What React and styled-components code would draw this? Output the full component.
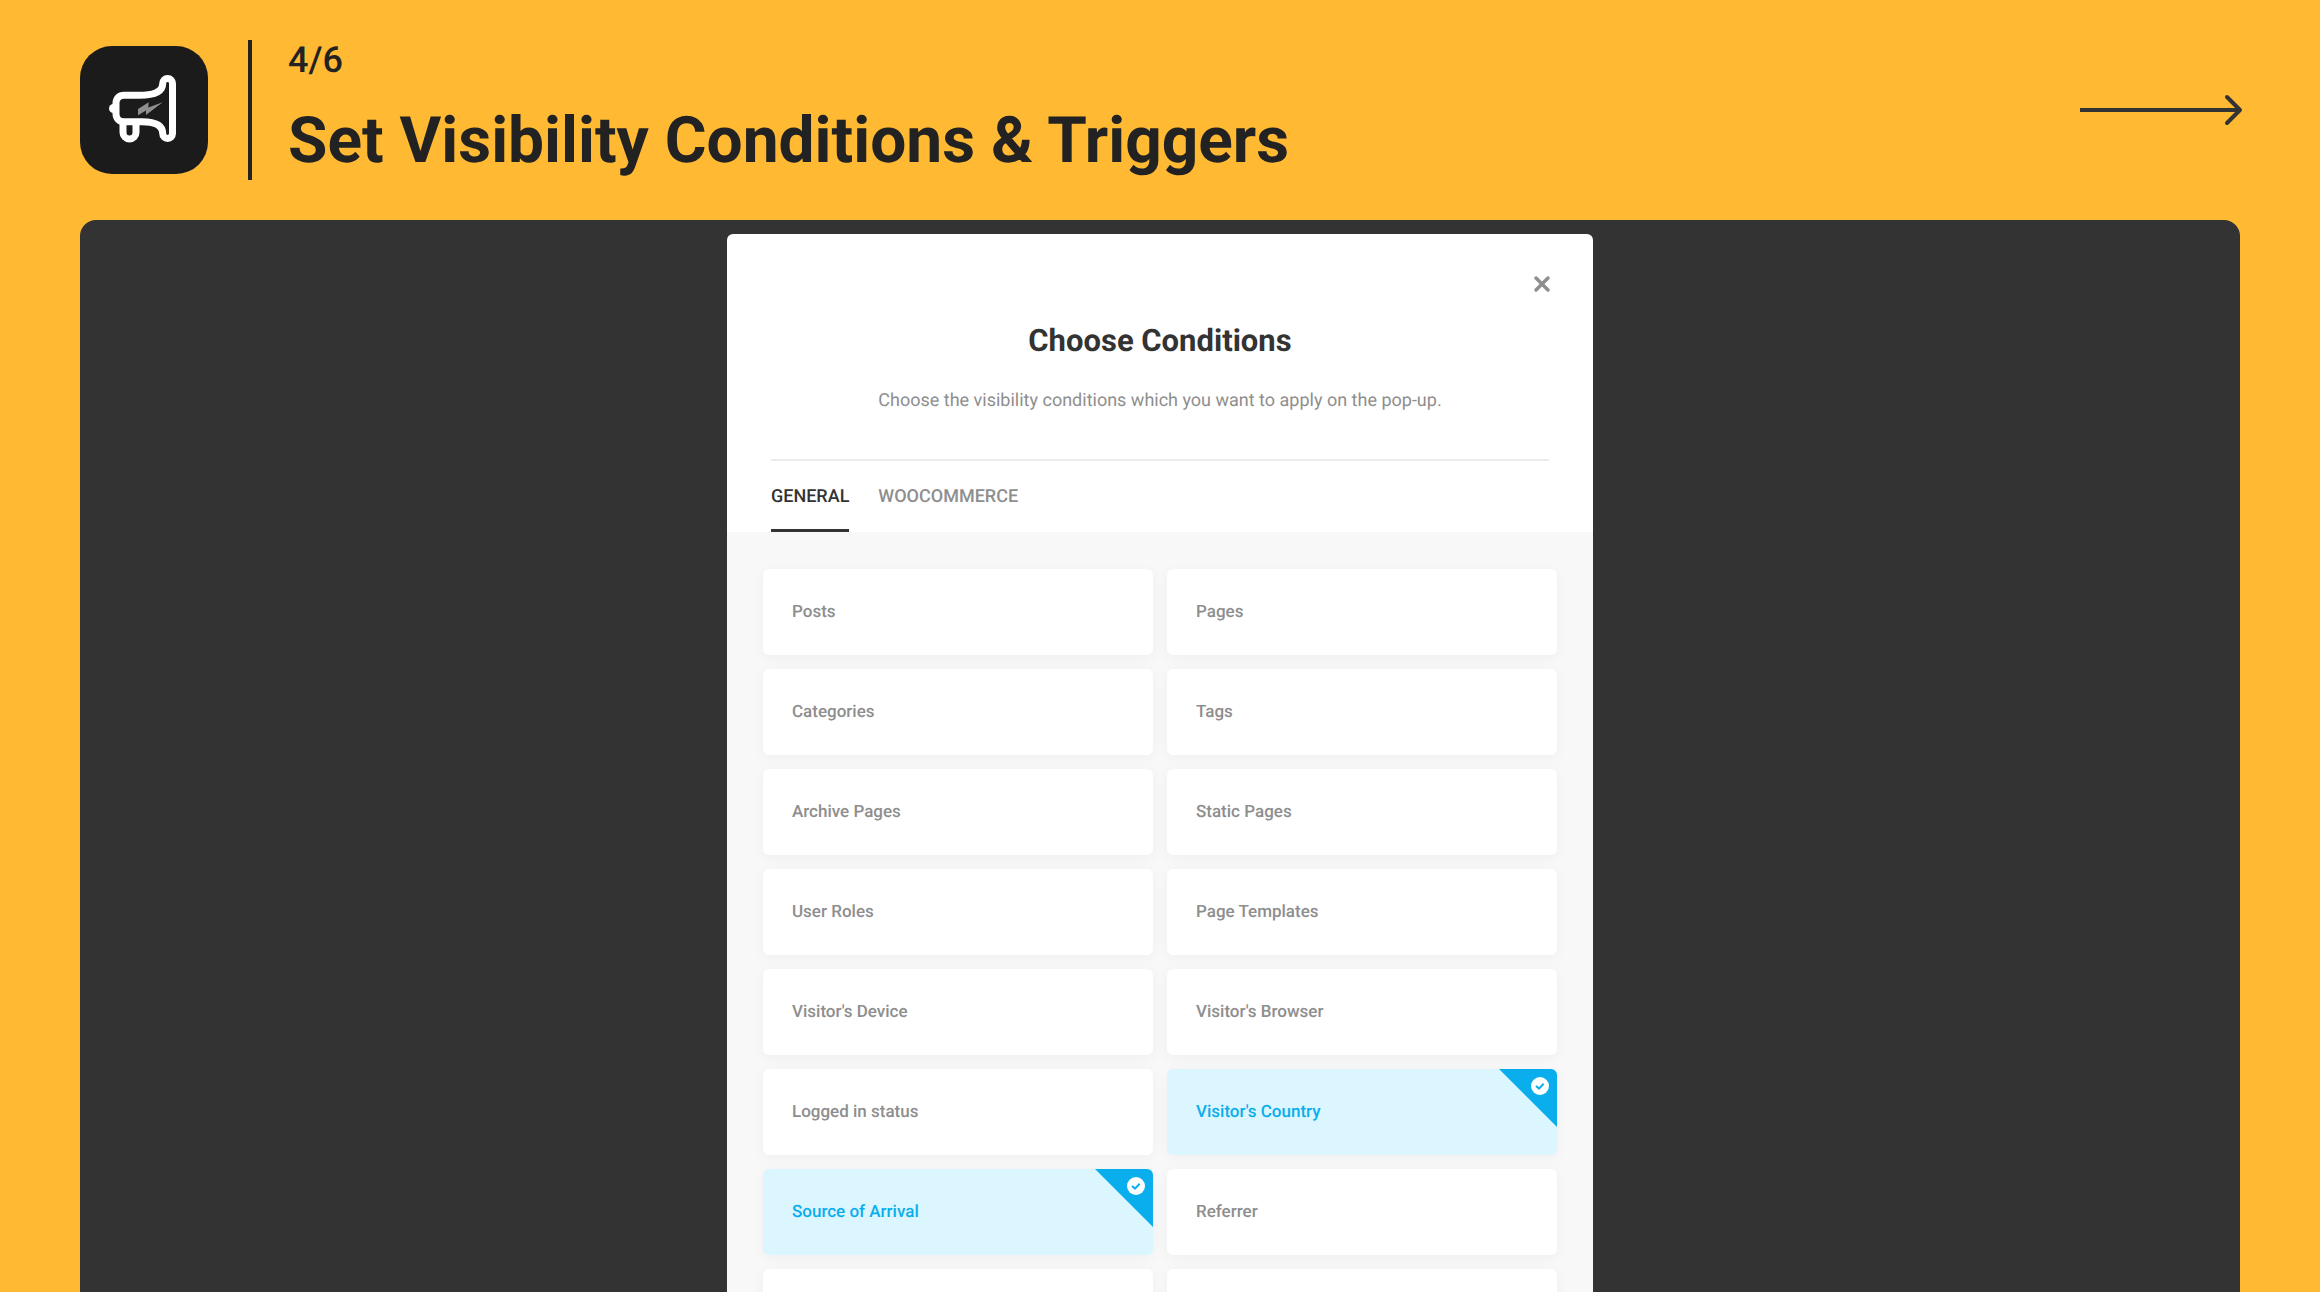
import React, { useState } from "react";
import styled, { createGlobalStyle } from "styled-components";

const GlobalStyle = createGlobalStyle`
  * {
    box-sizing: border-box;
  }
  body {
    margin: 0;
    background: #ffb933;
    color: #222222;
    font-family: Roboto, "Liberation Sans", sans-serif;
    text-rendering: geometricPrecision;
  }
`;

const Page = styled.div`
  display: flex;
  flex-direction: column;
  gap: 40px;
  height: 100vh;
  padding: 40px 80px 0;
  overflow: hidden;
`;

const Header = styled.header`
  display: flex;
  align-items: center;
  height: 140px;
  flex-shrink: 0;
`;

const Logo = styled.svg`
  width: 128px;
  height: 128px;
  flex-shrink: 0;
`;

const Heading = styled.div`
  display: flex;
  flex-direction: column;
  gap: 21px;
  align-self: stretch;
  margin-left: 40px;
  padding-left: 36px;
  border-left: 4px solid #222222;
  .step {
    margin: 0;
    font-size: 36px;
    font-weight: 500;
    line-height: 40px;
  }
  h1 {
    margin: 0;
    font-size: 64px;
    font-weight: 700;
    line-height: 80px;
  }
`;

const NextLink = styled.a`
  display: flex;
  margin-left: auto;
  margin-right: -4px;
  color: #333333;
`;

const Stage = styled.main`
  display: flex;
  flex: 1;
  justify-content: center;
  align-items: flex-start;
  min-height: 0;
  padding: 14px 14px 0;
  overflow: hidden;
  background: #333333;
  border-radius: 16px 16px 0 0;
`;

const Dialog = styled.section`
  width: 100%;
  max-width: 866px;
  overflow: hidden;
  background: #ffffff;
  border-radius: 6px;
`;

const DialogHead = styled.div`
  display: flex;
  flex-direction: column;
  margin: 0 44px;
  padding: 36px 0 44px;
  text-align: center;
  border-bottom: 2px solid #ebebeb;
  h2 {
    margin: 21px 0 0;
    color: #333333;
    font-size: 31px;
    font-weight: 700;
    line-height: 44px;
  }
  p {
    margin: 24px 0 0;
    color: #8e8e8e;
    font-size: 18px;
    line-height: 28px;
  }
`;

const CloseButton = styled.button`
  display: flex;
  align-self: flex-end;
  margin-right: -7px;
  padding: 4px;
  color: #8e8e8e;
  background: none;
  border: 0;
  cursor: pointer;
`;

const Tabs = styled.div`
  display: flex;
  gap: 29px;
  padding: 0 44px;
`;

const Tab = styled.button`
  height: 71px;
  padding: 3px 0 0;
  color: ${({ $active }) => ($active ? "#333333" : "#8e8e8e")};
  font-family: inherit;
  font-size: 18px;
  font-weight: 500;
  text-rendering: inherit;
  background: none;
  border: 0;
  border-bottom: 3px solid ${({ $active }) => ($active ? "#333333" : "transparent")};
  cursor: pointer;
`;

const Conditions = styled.div`
  display: grid;
  grid-template-columns: 1fr 1fr;
  gap: 14px;
  padding: 37px 36px;
  background: #f8f8f8;
`;

const Card = styled.div`
  position: relative;
  display: flex;
  align-items: center;
  height: 86px;
  padding: 0 29px;
  overflow: hidden;
  color: ${({ $checked }) => ($checked ? "#0aaeed" : "#8e8e8e")};
  font-size: 17px;
  font-weight: 500;
  background: ${({ $checked }) => ($checked ? "#dcf6ff" : "#ffffff")};
  border-radius: 6px;
  box-shadow: 0 3px 14px rgba(0, 0, 0, 0.04);
  cursor: pointer;
  input {
    position: absolute;
    inset: 0;
    margin: 0;
    opacity: 0;
    cursor: pointer;
  }
`;

const Corner = styled.svg`
  position: absolute;
  top: 0;
  right: 0;
  width: 58px;
  height: 58px;
`;

const initialConditions = [
  { label: "Posts" },
  { label: "Pages" },
  { label: "Categories" },
  { label: "Tags" },
  { label: "Archive Pages" },
  { label: "Static Pages" },
  { label: "User Roles" },
  { label: "Page Templates" },
  { label: "Visitor's Device" },
  { label: "Visitor's Browser" },
  { label: "Logged in status" },
  { label: "Visitor's Country", checked: true },
  { label: "Source of Arrival", checked: true },
  { label: "Referrer" },
];

const MegaphoneLogo = () => (
  <Logo viewBox="0 0 128 128" fill="none" aria-hidden="true">
    <rect width="128" height="128" rx="32" fill="#1c1b1b" />
    <circle cx="33.5" cy="62.5" r="4.5" fill="#ffffff" />
    <path
      d="M43 76V86.5a6.5 6.5 0 0 0 13 0V76"
      stroke="#ffffff"
      strokeWidth="7"
    />
    <path
      d="M92.5 37.5V87.5a4.9 4.9 0 0 1-9.8 0C82.7 79.5 76 75.7 62 75.7H44c-4.8 0-8-3.2-8-8V57.3c0-4.8 3.2-8 8-8H59C74 49.3 82.7 45.5 82.7 37.5a4.9 4.9 0 0 1 9.8 0Z"
      fill="#1c1b1b"
      stroke="#ffffff"
      strokeWidth="7"
    />
    <path
      d="M58 63L68.7 56.3L68.3 61.5L82.7 56.3L66 69V64.5L58 69.3Z"
      fill="#8f8f8f"
    />
  </Logo>
);

const SelectedCorner = () => (
  <Corner viewBox="0 0 58 58" aria-hidden="true">
    <path d="M0 0H58V58Z" fill="#0aaeed" />
    <circle cx="41" cy="17" r="9" fill="#ffffff" />
    <path
      d="M37 17l3 2.6 4.6-4.8"
      fill="none"
      stroke="#0aaeed"
      strokeWidth="2"
    />
  </Corner>
);

const App = () => {
  const [tab, setTab] = useState("GENERAL");
  const [conditions, setConditions] = useState(initialConditions);

  const toggle = (label) => {
    setConditions(
      conditions.map((item) =>
        item.label === label ? { ...item, checked: !item.checked } : item
      )
    );
  };

  return (
    <Page>
      <GlobalStyle />
      <Header>
        <MegaphoneLogo />
        <Heading>
          <p className="step">4/6</p>
          <h1>Set Visibility Conditions &amp; Triggers</h1>
        </Heading>
        <NextLink href="#next">
          <svg width="164" height="32" viewBox="0 0 164 32" fill="none">
            <path d="M0 16H160" stroke="currentColor" strokeWidth="4" />
            <path
              d="M147 3L160 16L147 29"
              stroke="currentColor"
              strokeWidth="4"
              strokeLinecap="round"
              strokeLinejoin="round"
            />
          </svg>
        </NextLink>
      </Header>
      <Stage>
        <Dialog role="dialog">
          <DialogHead>
            <CloseButton type="button">
              <svg width="20" height="20" viewBox="0 0 20 20">
                <path
                  d="M4 4L16 16M16 4L4 16"
                  stroke="currentColor"
                  strokeWidth="3.5"
                  strokeLinecap="round"
                />
              </svg>
            </CloseButton>
            <h2>Choose Conditions</h2>
            <p>Choose the visibility conditions which you want to apply on the pop-up.</p>
          </DialogHead>
          <Tabs role="tablist">
            {["GENERAL", "WOOCOMMERCE"].map((name) => (
              <Tab
                key={name}
                type="button"
                role="tab"
                aria-selected={tab === name}
                $active={tab === name}
                onClick={() => setTab(name)}
              >
                {name}
              </Tab>
            ))}
          </Tabs>
          <Conditions>
            {conditions.map(({ label, checked }) => (
              <Card as="label" key={label} $checked={checked}>
                <input
                  type="checkbox"
                  checked={!!checked}
                  onChange={() => toggle(label)}
                />
                {label}
                {checked && <SelectedCorner />}
              </Card>
            ))}
            <Card />
            <Card />
          </Conditions>
        </Dialog>
      </Stage>
    </Page>
  );
};

export default App;
